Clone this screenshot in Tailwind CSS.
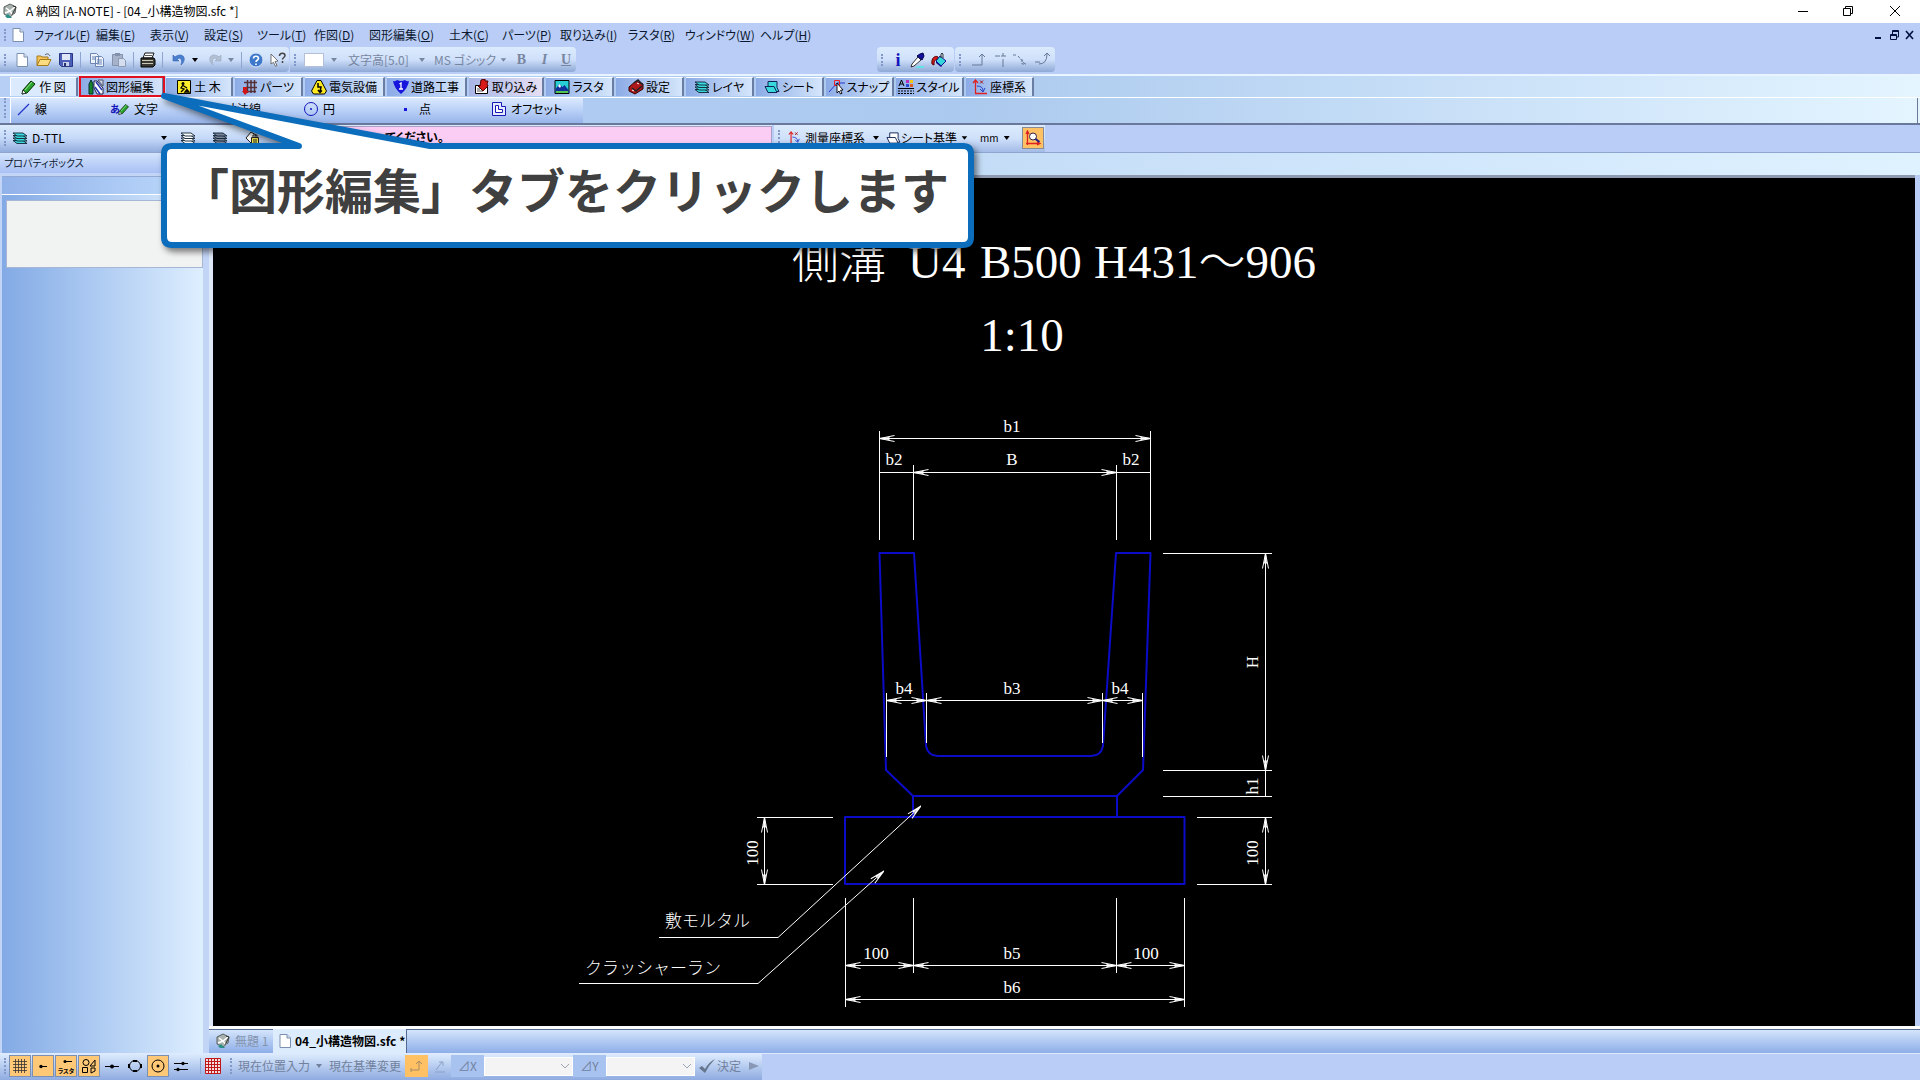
<!DOCTYPE html>
<html lang="ja">
<head>
<meta charset="utf-8">
<title>A 納図 [A-NOTE] - [04_小構造物図.sfc *]</title>
<script src="https://cdn.jsdelivr.net/npm/@tailwindcss/browser@4"></script>
</head>
<body class="relative flex min-h-screen flex-col overflow-x-hidden bg-[#b9cdf6] font-['Noto_Sans_CJK_JP',sans-serif] text-xs leading-4 text-[#0c1830] [font-feature-settings:'palt']">

<svg class="hidden" aria-hidden="true">
  <symbol id="app" viewBox="0 0 16 16"><path d="M2 4l6-3 6 3-1 6-5 4-6-3z" fill="#a9b3b0" stroke="#59605f"/><path d="M4 5l4 3 5-4M3 10l5-2 3 4" fill="none" stroke="#fff" stroke-width="1.5"/><path d="M3 13l3-2 4 4H5z" fill="#2b8f86"/><path d="M11 3l3 1-4 8" fill="none" stroke="#333"/></symbol>
  <symbol id="page" viewBox="0 0 16 16"><path d="M3 1.500h7l3.500 3.500v9.500h-10.500z" fill="#fff" stroke="#7b8fae"/><path d="M10 1.500v3.500h3.500" fill="#d6e2f2" stroke="#7b8fae"/></symbol>
  <symbol id="open" viewBox="0 0 16 16"><path d="M1 13V4h4l1 1h6v3" fill="#f3c455" stroke="#a87b1c"/><path d="M1 13.500l3-6h11l-3 6z" fill="#fbdc80" stroke="#a87b1c"/><path d="M9 3c2-2 4-1 5 1" fill="none" stroke="#555"/></symbol>
  <symbol id="save" viewBox="0 0 16 16"><path d="M1.500 1.500h13v13h-11l-2-2z" fill="#4c5fb8" stroke="#2a3784"/><path d="M4 2h8v6H4z" fill="#dfe6f7"/><path d="M5 10h6v4H5z" fill="#c9d0e8"/><path d="M6 11h2v3H6z" fill="#26306e"/></symbol>
  <symbol id="copy" viewBox="0 0 16 16"><path d="M1.500 1.500h6l2 2v8h-8zM6.500 4.500h6l2 2v8h-8z" fill="#eef3fb" stroke="#6c85b4"/><path d="M8 8h5M8 10h5M8 12h5M3 5h3M3 7h3" stroke="#6c85b4"/></symbol>
  <symbol id="paste" viewBox="0 0 16 16"><path d="M1.500 2.500h10v11h-10z" fill="#a6b2c9" stroke="#8391ac"/><path d="M4 1h5v3H4z" fill="#8391ac"/><path d="M7.500 6.500h5l2 2v6h-7z" fill="#d5deee" stroke="#8d9ab4"/></symbol>
  <symbol id="print" viewBox="0 0 16 16"><path d="M5 1h9l-2 5H3z" fill="#fff" stroke="#111"/><path d="M1 6h13l1 2v5l-2 2H1z" fill="#3a3a33" stroke="#000"/><path d="M2 8.500h11M2 11.500h11" stroke="#c9c9b6"/><path d="M5 3.500h7" stroke="#555"/></symbol>
  <symbol id="undo" viewBox="0 0 16 16"><path d="M2 3v6h6l-2-2c3-2 6 0 4 6 5-4 4-10-1-10-2 0-4 1-5 2z" fill="#4a7fd0" stroke="#3362ad" stroke-width=".6"/></symbol>
  <symbol id="redo" viewBox="0 0 16 16"><path d="M14 3v6H8l2-2C7 5 4 7 6 13 1 9 2 3 7 3c2 0 4 1 5 2z" fill="#b3bfd2" stroke="#98a7be" stroke-width=".6"/></symbol>
  <symbol id="help" viewBox="0 0 16 16"><circle cx="8" cy="8" r="7" fill="#3e78cb" stroke="#d7e5fa"/><path d="M5.500 6.500c0-3 5-3 5 0 0 1.500-2.500 1.500-2.500 3.500M8 11.500v1.500" fill="none" stroke="#fff" stroke-width="1.600"/></symbol>
  <symbol id="what" viewBox="0 0 16 16"><path d="M1 2l7 7-3 .5 2 4-1.500.8-2-4L1 12z" fill="#fff" stroke="#555" stroke-width=".8"/><path d="M9.500 4c0-4 5.500-3.500 5.500-.5 0 2-2.500 2-2.500 4M12.500 9v2" fill="none" stroke="#444" stroke-width="1.500"/></symbol>
  <symbol id="drop" viewBox="0 0 16 16"><path d="M5 6h6l-3 4z" fill="currentColor"/></symbol>
  <symbol id="eyedrop" viewBox="0 0 16 16"><path d="M9 14h6v2H6z" fill="#5fe3e6"/><path d="M9 5l3 3-7 6-3 1 1-3z" fill="#fff" stroke="#333"/><path d="M8 4l5 4 2-4-1-3-3 1z" fill="#10109a" stroke="#000050"/></symbol>
  <symbol id="bucket" viewBox="0 0 16 16"><path d="M1 12C0 6 4 3 7 5l1 2c-4 0-5 2-5 6z" fill="#d01818" stroke="#500"/><path d="M5 9l4-5 6 5-5 5z" fill="#35d7dc" stroke="#10108c"/><path d="M5 9l6 5-1 1-5-4z" fill="#10108c"/><path d="M10 6V2q1-2 2 0v4" fill="none" stroke="#333"/></symbol>
  <symbol id="pencil" viewBox="0 0 16 16"><path d="M2 11L10 2l4 3-8 9-5 1z" fill="#29a329" stroke="#052d05"/><path d="M4 11l7-8" stroke="#9ae69a"/><path d="M1 15l1-4 3 3z" fill="#fff" stroke="#000" stroke-width=".6"/></symbol>
  <symbol id="edit" viewBox="0 0 16 16"><path d="M1 15V5l2-4 2 4v10z" fill="#18832a" stroke="#033"/><path d="M6 2h3l6 7v6H9L6 9z" fill="#fff" stroke="#224"/><path d="M8 3l6 8M7 8l5 7" stroke="#2838b0" stroke-width="1.500"/><path d="M10 1h5v6z" fill="#cfd7ee" stroke="#556"/></symbol>
  <symbol id="work" viewBox="0 0 16 16"><path d="M1.500 1.500h13v13h-13z" fill="#ffee2e" stroke="#000"/><circle cx="7" cy="4.500" r="1.500"/><path d="M7 6L5 9l3 1-3 3M7 6.500l4 2.500M9 13l2-2.500 2 2.500z" fill="none" stroke="#000" stroke-width="1.300"/></symbol>
  <symbol id="parts" viewBox="0 0 16 16"><path d="M2 3.500h13M5.500 1v13M12.500 1v13M9 1v13M4 8.500h11M4 12.500h10" stroke="#553038" stroke-width="1.500"/><path d="M1 8h4v4h2l-4 4-3-4h1z" fill="#cf1515"/></symbol>
  <symbol id="elec" viewBox="0 0 16 16"><path d="M6 1.500h4L15.500 12l-2 3h-11l-2-3z" fill="#ffe921" stroke="#000"/><path d="M7 4v4h3l-1 5M7 11l2 2.500 2-2" fill="none" stroke="#000" stroke-width="1.500"/></symbol>
  <symbol id="road" viewBox="0 0 16 16"><path d="M0 2q2 1 4-1 4 2 8 0 2 2 4 1-1 7-8 13Q1 9 0 2z" fill="#1515dd"/><path d="M6.500 5L8 4v6M6 10h4" stroke="#fff" stroke-width="1.300" fill="none"/></symbol>
  <symbol id="import" viewBox="0 0 16 16"><path d="M1.500 6.500h12v8h-12z" fill="#fff" stroke="#000"/><path d="M3 10h3M3 12h6" stroke="#555"/><path d="M7 1l4-1v2h3l-1 3 1 2-5 5-5-5h2z" fill="#d81a1a" stroke="#500"/></symbol>
  <symbol id="raster" viewBox="0 0 16 16"><path d="M1 1.500h14v13H1z" fill="#27ced3" stroke="#000"/><path d="M1.500 10l4-5 3 3 2-2 4 5v3h-13z" fill="#10309a"/><path d="M4 7l1.500-2L7 7l-1 2z" fill="#fff"/><path d="M2 12h12v2H2z" fill="#51c451"/></symbol>
  <symbol id="tool" viewBox="0 0 16 16"><path d="M1 8l7-6 7 3v5l-8 5-6-3z" fill="#b01919" stroke="#300"/><path d="M6 4l4-3 5 5M4 9l4 3 6-5" stroke="#222" stroke-width="1.500" fill="none"/><path d="M4 11l2 1M9 4l2 1" stroke="#fff"/></symbol>
  <symbol id="layers" viewBox="0 0 16 16"><g fill="var(--fill,#38d8dc)" stroke="#123" stroke-width=".9"><path d="M1 10.500h10l4 3H5z"/><path d="M1 8h10l4 3H5z"/><path d="M1 5.500h10l4 3H5z"/><path d="M1 3h10l4 3H5z"/></g></symbol>
  <symbol id="sheet" viewBox="0 0 16 16"><path d="M4 2.500h9v6l2 4H7l-3-4z" fill="var(--fill,#38d8dc)" stroke="#125"/><path d="M1 7.500h9l3 6H4z" fill="var(--fill,#38d8dc)" stroke="#125"/></symbol>
  <symbol id="snap" viewBox="0 0 16 16"><path d="M0 13L8 4h8" fill="none" stroke="#2636cc"/><path d="M5.500 1.500h5v5h-5z" fill="none" stroke="#e22"/><path d="M8 4l6 7-2.500.3 1.500 3-1.500.7-1.500-3L8 14z" fill="#fff" stroke="#000" stroke-width=".9"/></symbol>
  <symbol id="style" viewBox="0 0 16 16"><path d="M1 7l2.500-6L6 7M2 5h3M0 9.500h16" fill="none" stroke="#000"/><path d="M0 12h16M0 14.500h16" stroke="#000" stroke-dasharray="2 1"/><path d="M8 1h3v3H8z" fill="#b62fb6"/><path d="M12 1h3v3h-3z" fill="#f0c619"/><path d="M8 5h3v3H8z" fill="#2b48d7"/><path d="M12 5h3v3h-3z" fill="#e35b25"/></symbol>
  <symbol id="coord" viewBox="0 0 16 16"><path d="M3.500 15V2M1 4l2.500-3L6 4M3 14.500h12" stroke="#d22" fill="none" stroke-width="1.300"/><path d="M8 1.500l3 3m0-3l-3 3" stroke="#a11"/><path d="M5 7q6 0 6 5M8 10l3 3 2-4" fill="none" stroke="#2340c8"/></symbol>
  <symbol id="palette" viewBox="0 0 16 16"><path d="M2 8l5-6 5 3-5 8z" fill="#fff" stroke="#222"/><path d="M7.500 7.500h7v7h-7z" fill="#f3e64c" stroke="#222"/><path d="M9 7V5h4v2M9 10h4M9 12h4" stroke="#222" fill="none"/></symbol>
  <symbol id="offset" viewBox="0 0 16 16"><path d="M1.500 1.500h9v4h4v9h-13z" fill="#e6ecff" stroke="#1818b8"/><path d="M4.500 4.500h3v4h4v3h-7z" fill="#fff" stroke="#1818b8"/></symbol>
  <symbol id="zoomc" viewBox="0 0 16 16"><path d="M2.500 15V2M1 4l1.500-3L4 4M1 13.500h14M12 12l3 1.500-3 1.500" stroke="#d22" fill="none" stroke-width="1.300"/><circle cx="8" cy="6.500" r="3.500" fill="#fff" stroke="#324"/><path d="M10.500 9l4 3" stroke="#1a1a8c" stroke-width="2"/></symbol>
  <symbol id="check" viewBox="0 0 16 16"><path d="M0 10l3-2 3 3q4-7 10-10Q10 7 6 15z" fill="#65758c"/></symbol>
</svg>

<!-- Window title -->
<header class="flex h-[23px] items-center bg-white pb-px text-black">
  <svg class="ml-0.5 size-4"><use href="#app"/></svg>
  <h1 class="ml-2 flex-1 whitespace-nowrap">A 納図 [A-NOTE] - [04_小構造物図.sfc *]</h1>
  <div class="flex">
    <button aria-label="最小化" class="grid h-5 w-[45px] place-items-center"><svg class="size-3" viewBox="0 0 12 12"><path d="M1 6.500h10" stroke="#000"/></svg></button>
    <button aria-label="元に戻す" class="grid h-5 w-[45px] place-items-center"><svg class="size-3" viewBox="0 0 12 12" fill="none" stroke="#000"><path d="M1.500 3.500h7v7h-7zM3.500 3.500v-2h7v7h-2"/></svg></button>
    <button aria-label="閉じる" class="grid h-5 w-[50px] place-items-center"><svg class="size-3" viewBox="0 0 12 12"><path d="M1 1l10 10M11 1L1 11" stroke="#000"/></svg></button>
  </div>
</header>

<!-- Menu -->
<nav class="flex h-6 items-center">
  <span class="ml-1 h-3 w-0.5 border-l-2 border-dotted border-[#8298c8]"></span>
  <svg class="ml-1 size-4"><use href="#page"/></svg>
  <div class="ml-2 grid flex-1 grid-cols-[62px_54px_54px_53px_57px_55px_80px_53px_58px_68px_57px_75px_60px] justify-start whitespace-nowrap *:text-left">
    <button>ファイル(<u>F</u>)</button><button>編集(<u>E</u>)</button><button>表示(<u>V</u>)</button><button>設定(<u>S</u>)</button><button>ツール(<u>T</u>)</button><button>作図(<u>D</u>)</button><button>図形編集(<u>O</u>)</button><button>土木(<u>C</u>)</button><button>パーツ(<u>P</u>)</button><button>取り込み(<u>I</u>)</button><button>ラスタ(<u>R</u>)</button><button>ウィンドウ(<u>W</u>)</button><button>ヘルプ(<u>H</u>)</button>
  </div>
  <div class="mr-1 flex gap-1">
    <button aria-label="文書を最小化" class="size-3"><svg viewBox="0 0 12 12"><path d="M3 9h6" stroke="#001040" stroke-width="2"/></svg></button>
    <button aria-label="文書を元に戻す" class="size-3"><svg viewBox="0 0 12 12" fill="none" stroke="#001040"><path d="M2.500 5.500h6v5h-6zM2 6.500h7M4.500 5V1.500h6V8H9M4 2.500h7"/></svg></button>
    <button aria-label="文書を閉じる" class="size-3"><svg viewBox="0 0 12 12"><path d="M2 2l7 8M9 2l-7 8" stroke="#001040" stroke-width="1.600"/></svg></button>
  </div>
</nav>

<!-- Standard toolbars -->
<div class="flex h-[27px] items-start text-[#7886a0]">
  <div class="flex h-[25px] w-[289px] items-center rounded-r bg-linear-to-b from-[#dcebfd] via-[#cfe0fa] to-[#8fa9d6] pl-1">
    <span class="mr-2 h-3 border-l-2 border-dotted border-[#8298c8]"></span>
    <button aria-label="新規" class="w-[22px]"><svg class="size-4"><use href="#page"/></svg></button>
    <button aria-label="開く" class="w-[22px]"><svg class="size-4"><use href="#open"/></svg></button>
    <button aria-label="保存" class="w-[22px]"><svg class="size-4"><use href="#save"/></svg></button>
    <span class="mr-2 h-4 w-px bg-[#8ea5d2]"></span>
    <button aria-label="コピー" class="w-[22px]"><svg class="size-4"><use href="#copy"/></svg></button>
    <button aria-label="貼り付け" class="w-[22px]"><svg class="size-4"><use href="#paste"/></svg></button>
    <span class="mr-1.5 h-4 w-px bg-[#8ea5d2]"></span>
    <button aria-label="印刷" class="w-[22px]"><svg class="size-4"><use href="#print"/></svg></button>
    <span class="mr-2 h-4 w-px bg-[#8ea5d2]"></span>
    <button aria-label="元に戻す操作" class="flex w-[36px] text-black"><svg class="size-4"><use href="#undo"/></svg><svg class="size-4"><use href="#drop"/></svg></button>
    <button aria-label="やり直し" class="flex w-[34px]"><svg class="size-4"><use href="#redo"/></svg><svg class="size-4"><use href="#drop"/></svg></button>
    <span class="mr-1.5 h-4 w-px bg-[#8ea5d2]"></span>
    <button aria-label="ヘルプ" class="w-[22px]"><svg class="size-4"><use href="#help"/></svg></button>
    <button aria-label="ポップヒント" class="w-[18px]"><svg class="size-4"><use href="#what"/></svg></button>
  </div>
  <div class="ml-px flex h-[25px] w-[286px] items-center rounded-r bg-linear-to-b from-[#dcebfd] via-[#cfe0fa] to-[#8fa9d6] pl-1">
    <span class="mr-2 h-3 border-l-2 border-dotted border-[#8298c8]"></span>
    <button aria-label="文字色" class="flex w-[44px] items-center gap-0.5"><span class="h-3.5 w-5 border border-[#b4c0d8] bg-white"></span><svg class="size-4"><use href="#drop"/></svg></button>
    <button class="flex w-[86px] items-center justify-between whitespace-nowrap">文字高[5.0]<svg class="mr-1 size-4"><use href="#drop"/></svg></button>
    <button class="flex w-[76px] items-center justify-between whitespace-nowrap">MS ゴシック<svg class="-mr-px size-4"><use href="#drop"/></svg></button>
    <button class="w-[23px] font-['Liberation_Serif',serif] text-sm leading-4 font-bold">B</button>
    <button class="w-[23px] font-['Liberation_Serif',serif] text-sm leading-4 font-bold italic">I</button>
    <button class="w-[20px] font-['Liberation_Serif',serif] text-sm leading-4 font-bold underline">U</button>
  </div>
  <div class="ml-[301px] flex h-[25px] w-[77px] items-center rounded bg-linear-to-b from-[#dcebfd] via-[#cfe0fa] to-[#8fa9d6] pl-1">
    <span class="mr-1 h-3 border-l-2 border-dotted border-[#8298c8]"></span>
    <button class="w-[22px] font-['Liberation_Serif',serif] text-lg leading-4 font-bold text-[#1515bb]">i</button>
    <button aria-label="スポイト" class="w-[22px]"><svg class="size-4"><use href="#eyedrop"/></svg></button>
    <button aria-label="塗り" class="w-[22px]"><svg class="size-4"><use href="#bucket"/></svg></button>
  </div>
  <div class="ml-px flex h-[25px] w-[100px] items-center rounded bg-linear-to-b from-[#dcebfd] via-[#cfe0fa] to-[#8fa9d6] pl-1">
    <span class="mr-2.5 h-3 border-l-2 border-dotted border-[#8298c8]"></span>
    <button aria-label="直角" class="w-[22px]"><svg class="size-4" viewBox="0 0 16 16"><path d="M1 13h10V2M8 5l3-3 3 3" fill="none" stroke="#667898"/></svg></button>
    <button aria-label="垂線" class="w-[20px]"><svg class="size-4" viewBox="0 0 16 16"><path d="M2 4h5M10 1v3M8 4h5M10 7v8" fill="none" stroke="#667898"/></svg></button>
    <button aria-label="斜線" class="w-[22px]"><svg class="size-4" viewBox="0 0 16 16"><path d="M0 3h4M5 4l7 8M9 7v5h4" fill="none" stroke="#667898" stroke-dasharray="3 1"/></svg></button>
    <button aria-label="接線" class="w-[18px]"><svg class="size-4" viewBox="0 0 16 16"><path d="M0 10h5M4 12q8 0 8-10M9 4l3-3 3 3" fill="none" stroke="#667898"/></svg></button>
  </div>
</div>

<!-- Command tabs -->
<section class="flex h-[51px] flex-col border-t-2 border-b-2 border-t-[#e8f4ff] border-b-[#69789b] bg-linear-to-r from-[#b7cef5] via-[#abc9ee] to-[#e4f5ff]">
  <div class="flex h-[22px] items-start gap-0.5 border-b border-white pt-px pl-2.5 whitespace-nowrap text-black *:flex *:h-[19px] *:items-center *:justify-center *:gap-0.5 *:border-t *:border-r-2 *:border-t-white *:border-r-[#6a7da3]">
    <button class="w-[68px] border-l border-l-white bg-[#dceafd]"><svg class="size-4"><use href="#pencil"/></svg>作 図</button>
    <button class="w-[84px] bg-linear-to-r from-[#8cabe6] to-[#d5e3f8] outline-2 -outline-offset-1 outline-[#e01020]"><svg class="size-4"><use href="#edit"/></svg>図形編集</button>
    <button class="w-[67px] bg-linear-to-r from-[#8cabe6] to-[#d5e6fb]"><svg class="size-4"><use href="#work"/></svg>土 木</button>
    <button class="w-[68px] bg-linear-to-r from-[#8cabe6] to-[#d5e6fb]"><svg class="size-4"><use href="#parts"/></svg>パーツ</button>
    <button class="w-[80px] bg-linear-to-r from-[#8cabe6] to-[#d5e6fb]"><svg class="size-4"><use href="#elec"/></svg>電気設備</button>
    <button class="w-[80px] bg-linear-to-r from-[#8cabe6] to-[#d5e6fb]"><svg class="size-4"><use href="#road"/></svg>道路工事</button>
    <button class="w-[75px] bg-linear-to-r from-[#a9b6e6] to-[#e6dff3]"><svg class="size-4"><use href="#import"/></svg>取り込み</button>
    <button class="w-[68px] bg-linear-to-r from-[#8cabe6] to-[#d5e6fb]"><svg class="size-4"><use href="#raster"/></svg>ラスタ</button>
    <button class="w-[68px] bg-linear-to-r from-[#8cabe6] to-[#d5e6fb]"><svg class="size-4"><use href="#tool"/></svg>設定</button>
    <button class="w-[68px] bg-linear-to-r from-[#8cabe6] to-[#d5e6fb]"><svg class="size-4"><use href="#layers"/></svg>レイヤ</button>
    <button class="w-[68px] bg-linear-to-r from-[#8cabe6] to-[#d5e6fb]"><svg class="size-4"><use href="#sheet"/></svg>シート</button>
    <button class="w-[68px] bg-linear-to-r from-[#8cabe6] to-[#d5e6fb]"><svg class="size-4"><use href="#snap"/></svg>スナップ</button>
    <button class="w-[68px] bg-linear-to-r from-[#8cabe6] to-[#d5e6fb]"><svg class="size-4"><use href="#style"/></svg>スタイル</button>
    <button class="w-[68px] bg-linear-to-r from-[#8cabe6] to-[#d5e6fb]"><svg class="size-4"><use href="#coord"/></svg>座標系</button>
  </div>
  <div class="mr-0.5 flex flex-1 border-r border-[#69789b] pl-1">
    <span class="h-5 border-l-2 border-dotted border-[#8298c8]"></span>
    <div class="ml-1 grid w-[573px] grid-cols-[95px_95px_98px_96px_92px_97px] items-center border-l border-white bg-linear-to-b from-[#dbe9fd] via-[#b9d0f7] to-[#98b5ea] pb-1 pl-1 whitespace-nowrap text-black *:flex *:items-center *:gap-1">
      <button><svg class="size-4" viewBox="0 0 16 16"><path d="M3 14L14 3" stroke="#2436c8" stroke-width="1.300"/></svg>線</button>
      <button><span class="text-[10px] font-bold text-[#1515bb]">あ</span><svg class="-ml-1.5 size-3"><use href="#pencil"/></svg>文字</button>
      <button><svg class="size-4" viewBox="0 0 16 16"><path d="M1 3v10M15 3v10M1 8h14" stroke="#2436c8"/></svg>寸法線</button>
      <button><svg class="size-4" viewBox="0 0 16 16"><circle cx="8" cy="8" r="6.500" fill="none" stroke="#1515bb"/><circle cx="8" cy="8" r="1" fill="#1515bb"/></svg>円</button>
      <button><svg class="size-4" viewBox="0 0 16 16"><path d="M5 7h3v3H5z" fill="#1515dd"/></svg>点</button>
      <button><svg class="size-4"><use href="#offset"/></svg>オフセット</button>
    </div>
  </div>
</section>

<!-- Layer bar -->
<div class="flex h-[28px] items-center border-b border-[#8ea6cf] whitespace-nowrap text-black">
  <div class="flex h-full w-[772px] items-center bg-linear-to-b from-[#dcebfd] via-[#c4d8f8] to-[#93aede] pb-0.5 pl-1">
    <span class="h-4 border-l-2 border-dotted border-[#8298c8]"></span>
    <button class="ml-1.5 flex w-[160px] items-center gap-1"><svg class="size-4"><use href="#layers"/></svg><span class="flex-1 text-left">D-TTL</span><svg class="size-4"><use href="#drop"/></svg></button>
    <button aria-label="レイヤ表示" class="ml-2 w-8"><svg class="size-4 [--fill:#ffffff]"><use href="#layers"/></svg></button>
    <button aria-label="レイヤ非表示" class="w-8"><svg class="size-4 [--fill:#7a8498]"><use href="#layers"/></svg></button>
    <button aria-label="レイヤ設定" class="w-8"><svg class="size-4"><use href="#palette"/></svg></button>
    <output class="ml-5 h-[24px] flex-1 border border-[#a99fc4] bg-[#fbcdf5] pl-[88px] leading-5 font-bold">てください。</output>
  </div>
  <div class="ml-0.5 flex h-full w-[271px] items-center bg-linear-to-b from-[#dcebfd] via-[#cfe0fa] to-[#a3bbe6] pb-0.5 pl-1">
    <span class="h-4 border-l-2 border-dotted border-[#8298c8]"></span>
    <button class="ml-2 flex w-[96px] items-center justify-between"><svg class="size-3.5"><use href="#coord"/></svg>測量座標系<svg class="size-4"><use href="#drop"/></svg></button>
    <button class="ml-0.5 flex w-[86px] items-center justify-between"><svg class="size-4 [--fill:#ffffff]"><use href="#sheet"/></svg>シート基準<svg class="size-4"><use href="#drop"/></svg></button>
    <button class="ml-2 flex w-[34px] items-center justify-between text-[10px]">mm<svg class="size-4"><use href="#drop"/></svg></button>
    <button aria-label="座標拡大" class="ml-2 grid size-[22px] place-items-center border border-[#8a8a92] bg-[#ffc163]"><svg class="size-4"><use href="#zoomc"/></svg></button>
  </div>
</div>

<div class="flex flex-1">
  <!-- Property panel -->
  <aside class="flex w-[209px] flex-col bg-[#c3d5f7] pr-1.5 pl-0.5">
    <h2 class="-mr-1.5 -ml-0.5 h-5 bg-linear-to-b from-[#d3e4fd] to-[#a9c0f4] pl-1 text-[10px] leading-5">プロパティボックス</h2>
    <div class="mt-[3px] h-[19px] border-t border-b border-t-[#94a9d4] border-b-white bg-linear-to-r from-[#91b1ea] to-[#bfdcfb]"></div>
    <div class="flex flex-1 flex-col bg-linear-to-r from-[#83aae5] to-[#deefff] pt-[5px] pl-1">
      <div class="h-[68px] border border-[#a6b6d4] bg-[#f1f2f2]"></div>
    </div>
  </aside>

  <main class="flex min-w-0 flex-1 flex-col">
    <div class="h-[22px] bg-linear-to-r from-[#aecbf0] to-[#dff2ff]"></div>
    <div class="mr-[5px] min-h-0 flex-1 border-t-3 border-l-4 border-[#8f9ab0] border-l-[#dfe8f8] bg-black">
      <svg class="block w-full [font-feature-settings:normal]" viewBox="213 178 1702 848" fill="none" stroke="#fff" font-family="'Liberation Serif','Noto Sans CJK JP',serif" font-size="17" text-anchor="middle">
        <defs>
          <marker id="arrow" viewBox="0 0 16 8" refX="16" refY="4" markerWidth="16" markerHeight="8" markerUnits="userSpaceOnUse" orient="auto-start-reverse"><path d="M1 1L16 4L1 7M6 3L16 4L6 5" fill="none" stroke="#fff"/></marker>
        </defs>
        <g fill="#fff" stroke="none" font-size="47" font-weight="300" text-anchor="start">
          <text y="278"><tspan x="792">側溝</tspan> <tspan x="908">U4</tspan> <tspan x="980">B500</tspan> <tspan x="1094">H431～906</tspan></text>
          <text x="1022" y="351" text-anchor="middle">1:10</text>
        </g>
        <g stroke="#0b0bc8" stroke-width="2" stroke-linejoin="round">
          <path d="M914 553H879.500L886 770L913 796H1117L1143 770L1150.500 553H1116L1103 746Q1101 756 1091 756H938Q928 756 926 746z"/>
          <path d="M913 796V817M1117 796V817M845 817H1184.500V884H845z"/>
        </g>
        <g shape-rendering="crispEdges">
          <path d="M879.500 431V540M1150.500 431V540M913.500 465V540M1116.500 465V540M879.500 472.500H913.500M1116.500 472.500H1150.500"/>
          <path d="M886.500 693V757M1142.500 693V757M926.500 693V743M1102.500 693V743"/>
          <path d="M1163 553.500H1272M1163 770.500H1272M1163 796.500H1272M1265.500 770V796M1197 817.500H1272M1197 884.500H1272M757 817.500H833M757 884.500H833"/>
          <path d="M845.500 898V1007M1184.500 898V1007M913.500 898V973M1116.500 898V973"/>
          <path d="M659 937.500H778M579 983.500H758"/>
        </g>
        <g marker-start="url(#arrow)" marker-end="url(#arrow)">
          <path d="M879.500 438.500H1150.500"/><path d="M913.500 472.500H1116.500"/>
          <path d="M886.500 700.500H926.500"/><path d="M926.500 700.500H1102.500"/><path d="M1102.500 700.500H1142.500"/>
          <path d="M1265.500 553.500V770.500"/><path d="M1265.500 817.500V884.500"/><path d="M764.500 817.500V884.500"/>
          <path d="M845.500 965.500H913.500"/><path d="M913.500 965.500H1116.500"/><path d="M1116.500 965.500H1184.500"/><path d="M845.500 999.500H1184.500"/>
        </g>
        <path d="M778 937.500L921 806" marker-end="url(#arrow)"/><path d="M758 983.500L884 871" marker-end="url(#arrow)"/>
        <g fill="#fff" stroke="none">
          <text x="1012" y="432">b1</text><text x="894" y="465">b2</text><text x="1012" y="465">B</text><text x="1131" y="465">b2</text>
          <text x="904" y="694">b4</text><text x="1012" y="694">b3</text><text x="1120" y="694">b4</text>
          <text x="876" y="959">100</text><text x="1012" y="959">b5</text><text x="1146" y="959">100</text><text x="1012" y="993">b6</text>
          <text transform="translate(1258 662) rotate(-90)">H</text><text transform="translate(1258 786) rotate(-90)">h1</text>
          <text transform="translate(1258 853) rotate(-90)">100</text><text transform="translate(758 853) rotate(-90)">100</text>
          <g font-weight="300" text-anchor="start"><text x="665" y="927">敷モルタル</text><text x="585" y="974">クラッシャーラン</text></g>
        </g>
      </svg>
    </div>
    <div class="flex h-[27px] border-t-3 border-white bg-linear-to-b from-[#d7e7fc] to-[#8eaee8] whitespace-nowrap">
      <button class="flex w-[64px] items-center gap-1 border-t border-[#546a91] pb-0.5 pl-1.5 text-[#8494ae]"><svg class="size-4"><use href="#app"/></svg>無題 1</button>
      <button class="flex w-[134px] items-center gap-0.5 border-r border-[#546a91] bg-[#dcecfd] pb-px pl-1 font-bold text-black"><svg class="size-4"><use href="#page"/></svg>04_小構造物図.sfc *</button>
      <div class="flex-1 border-t border-[#546a91]"></div>
    </div>
  </main>
</div>

<!-- Status bar -->
<footer class="flex h-[27px] border-t border-[#dfeaff] whitespace-nowrap text-[#71819d]">
  <div class="flex w-[226px] items-center bg-linear-to-b from-[#dcebfd] to-[#8fabe0] pb-0.5 pl-1 text-black">
    <span class="mr-[3px] h-4 border-l-2 border-dotted border-[#8298c8]"></span>
    <div class="flex gap-px *:grid *:size-[22px] *:place-items-center">
      <button aria-label="グリッド" class="border border-[#7b8fb2] bg-[#ffc877]"><svg class="size-4" viewBox="0 0 16 16"><path d="M1 3.500h14M1 6.500h14M1 9.500h14M1 12.500h14M3.500 1v14M6.500 1v14M9.500 1v14M12.500 1v14" stroke="#333" stroke-width=".8"/></svg></button>
      <button aria-label="端点" class="border border-[#7b8fb2] bg-[#ffc877]"><svg class="size-4" viewBox="0 0 16 16"><path d="M5 8.500h7" stroke="#000"/><circle cx="6" cy="8.500" r="1.700"/></svg></button>
      <button class="border border-[#7b8fb2] bg-[#ffc877]"><svg class="size-5" viewBox="0 0 20 20"><path d="M8 5.500h8" stroke="#000"/><circle cx="9" cy="5.500" r="1.500"/><text x="10" y="17" font-size="6" font-weight="700" text-anchor="middle">ラスタ</text></svg></button>
      <button aria-label="図形" class="border border-[#7b8fb2] bg-[#ffc877]"><svg class="size-4" viewBox="0 0 16 16" fill="none" stroke="#000"><circle cx="5" cy="4.500" r="3"/><path d="M1.500 9.500h5v5h-5zM14 2v6H9zM10 10h4v3l-4 2z"/></svg></button>
      <button aria-label="中点"><svg class="size-4" viewBox="0 0 16 16"><path d="M1 8.500h14" stroke="#000"/><circle cx="8" cy="8.500" r="2"/></svg></button>
      <button aria-label="四半点"><svg class="size-4" viewBox="0 0 16 16"><circle cx="8" cy="8" r="5.500" fill="none" stroke="#000"/><path d="M6 2h4v2H6zM6 12h4v2H6zM1 6h2v4H1zM13 6h2v4h-2z"/></svg></button>
      <button aria-label="中心点" class="border border-[#7b8fb2] bg-[#ffc877]"><svg class="size-4" viewBox="0 0 16 16"><circle cx="8" cy="8" r="6" fill="none" stroke="#000"/><circle cx="8" cy="8" r="1.500"/></svg></button>
      <button aria-label="線上"><svg class="size-4" viewBox="0 0 16 16"><path d="M1 5.500h14M1 11.500h14" stroke="#000"/><circle cx="10" cy="5.500" r="1.700"/><circle cx="5" cy="11.500" r="1.700"/></svg></button>
    </div>
    <span class="mr-1 ml-2 h-4 w-px bg-[#8ea5d2]"></span>
    <button aria-label="方眼"><svg class="size-4" viewBox="0 0 16 16"><path d="M.5.500h15v15H.500z" fill="#f5dede" stroke="#c01818"/><path d="M1 3.500h14M1 6.500h14M1 9.500h14M1 12.500h14M3.500 1v14M6.500 1v14M9.500 1v14M12.500 1v14" stroke="#c01818"/></svg></button>
  </div>
  <div class="flex w-[536px] items-center bg-linear-to-b from-[#dcebfd] to-[#8fabe0] pb-0.5 pl-1">
    <span class="mr-1.5 h-4 border-l-2 border-dotted border-[#8298c8]"></span>
    <button class="flex w-[91px] items-center justify-between">現在位置入力<svg class="mr-0.5 size-4"><use href="#drop"/></svg></button>
    <button class="w-[76px] text-left">現在基準変更</button>
    <button aria-label="相対" class="grid h-[22px] w-[23px] place-items-center bg-[#ffc163]"><svg class="size-4" viewBox="0 0 16 16"><path d="M2 12h8V4M7 6l3-3 3 3M2 10v4" fill="none" stroke="#a58a66"/></svg></button>
    <button aria-label="極座標" class="grid h-[22px] w-[23px] place-items-center"><svg class="size-4" viewBox="0 0 16 16"><path d="M3 14h10M4 12l6-8M7 4h4v4" fill="none" stroke="#8ba0c4"/></svg></button>
    <label for="dx" class="grid h-[22px] w-[33px] place-items-center bg-[#a9c3f1]">⊿X</label>
    <select id="dx" class="h-[19px] w-[89px] appearance-none border border-white bg-[#f3f4f3]"><option></option></select>
    <svg class="-ml-4 size-4" viewBox="0 0 16 16"><path d="M4 6l4 4 4-4" fill="none" stroke="#9aa3b3"/></svg>
    <label for="dy" class="grid h-[22px] w-[33px] place-items-center bg-[#a9c3f1]">⊿Y</label>
    <select id="dy" class="h-[19px] w-[89px] appearance-none border border-white bg-[#f3f4f3]"><option></option></select>
    <svg class="-ml-4 size-4" viewBox="0 0 16 16"><path d="M4 6l4 4 4-4" fill="none" stroke="#9aa3b3"/></svg>
    <button class="ml-1 flex items-center gap-0.5"><svg class="size-4"><use href="#check"/></svg>決定</button>
    <svg class="ml-2 size-2.5" viewBox="0 0 10 10"><path d="M0 1l10 4-10 4z" fill="#8797b5"/></svg>
  </div>
</footer>

<!-- Guidance balloon -->
<div class="absolute top-[90px] left-[156px] h-[170px] w-[826px]">
  <svg class="absolute inset-0 overflow-visible drop-shadow-[3px_4px_3px_rgb(0_0_0/0.5)]" viewBox="156 90 826 170"><path d="M172 146H299L164 96L430 146H963Q971 146 971 154V237Q971 245 963 245H172Q164 245 164 237V154Q164 146 172 146z" fill="#fff" stroke="#0b6dbb" stroke-width="6" stroke-linejoin="round"/></svg>
  <p class="relative pt-[66px] pl-[25px] text-5xl leading-[64px] font-bold whitespace-nowrap text-[#404040] [font-feature-settings:normal]">「図形編集」タブをクリックします</p>
</div>
</body>
</html>
